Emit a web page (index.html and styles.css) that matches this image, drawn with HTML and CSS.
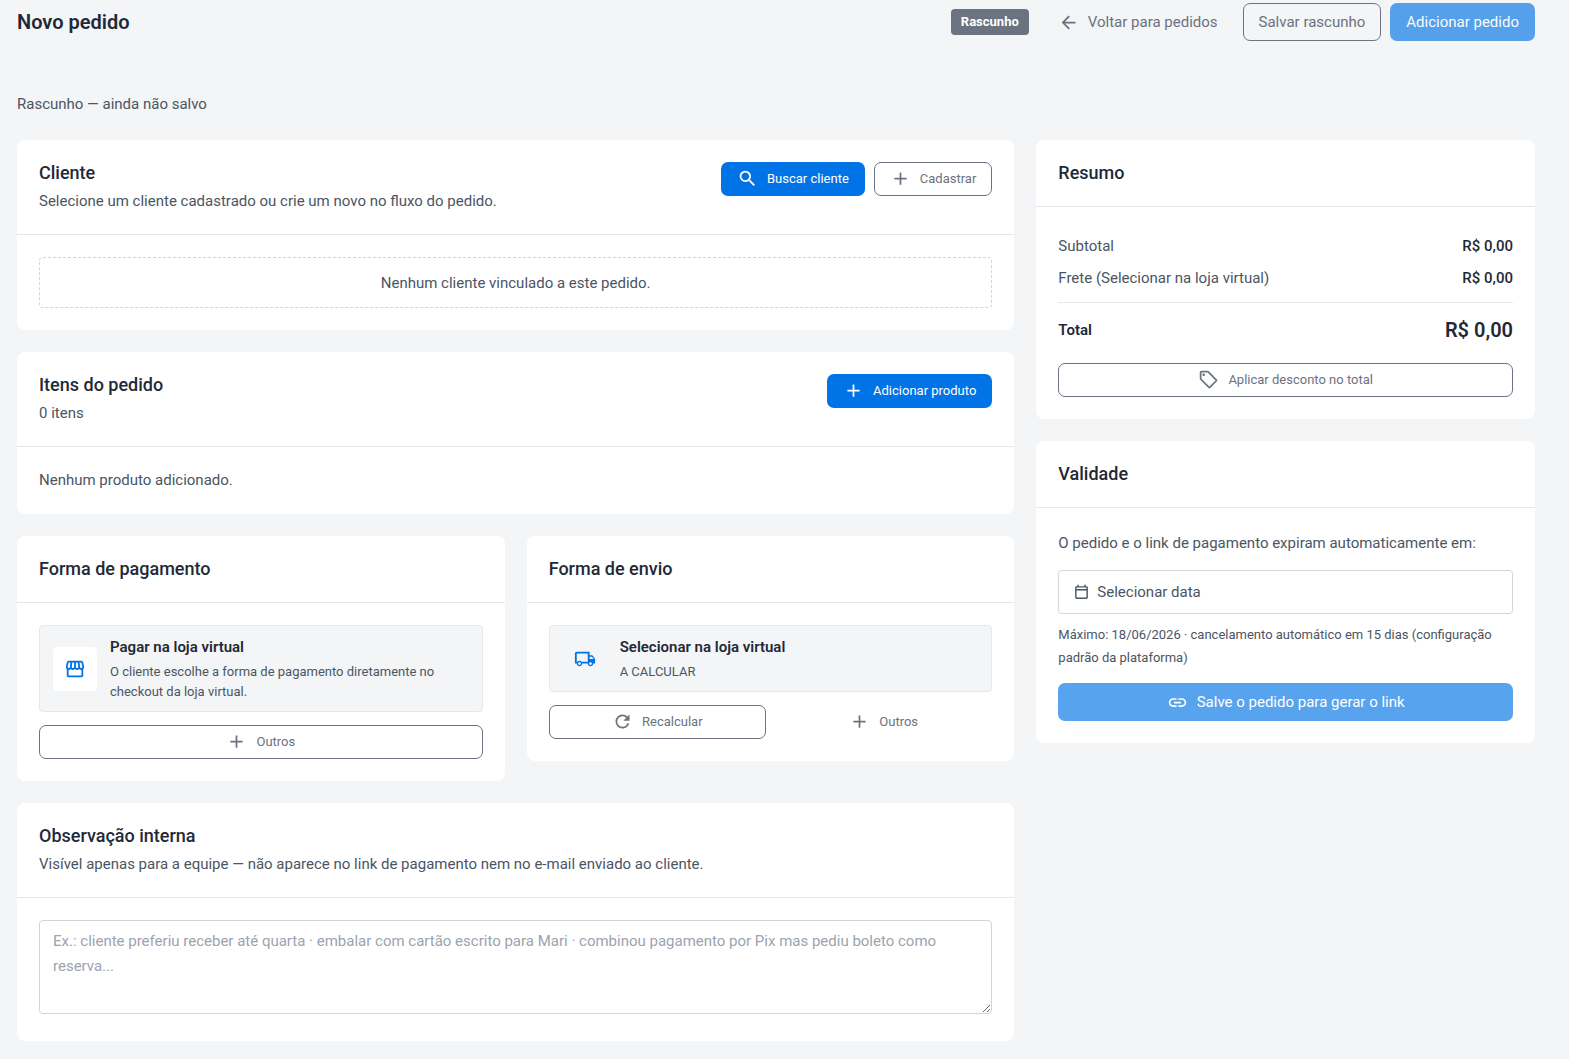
FILE: index.html
```html
<!DOCTYPE html>
<html lang="pt-BR">

<head>
    <meta charset="UTF-8">
    <meta name="viewport" content="width=device-width, initial-scale=1.0">
    <title>Novo pedido</title>
    <link rel="stylesheet" href="styles.css">
</head>

<body>
    <!-- Ícones reutilizados -->
    <svg class="sprite" aria-hidden="true">
        <symbol id="icon-plus" viewBox="0 0 24 24">
            <path d="M19 13h-6v6h-2v-6H5v-2h6V5h2v6h6v2z" />
        </symbol>
    </svg>

    <!-- Cabeçalho -->
    <header class="page-header">
        <h1>Novo pedido</h1>
        <div class="page-actions">
            <span class="badge">Rascunho</span>
            <a class="btn btn-text" href="#pedidos">
                <svg class="icon" viewBox="0 0 24 24"><path d="M20 11v2H8l5.5 5.5-1.42 1.42L4.16 12l7.92-7.92L13.5 5.5 8 11h12z" /></svg>
                Voltar para pedidos
            </a>
            <button type="button" class="btn btn-outline">Salvar rascunho</button>
            <button type="button" class="btn btn-primary" disabled>Adicionar pedido</button>
        </div>
    </header>

    <main>
        <p class="status">Rascunho — ainda não salvo</p>

        <div class="layout">
            <div class="column">
                <!-- Cliente -->
                <section class="card">
                    <div class="card-header">
                        <div>
                            <h2>Cliente</h2>
                            <p class="subtitle">Selecione um cliente cadastrado ou crie um novo no fluxo do pedido.</p>
                        </div>
                        <div class="card-actions">
                            <button type="button" class="btn btn-sm btn-primary">
                                <svg class="icon" viewBox="0 0 24 24"><path d="M9.5 3A6.5 6.5 0 0 1 16 9.5c0 1.61-.59 3.09-1.56 4.23l.27.27h.79l5 5-1.5 1.5-5-5v-.79l-.27-.27A6.516 6.516 0 0 1 9.5 16 6.5 6.5 0 0 1 3 9.5 6.5 6.5 0 0 1 9.5 3m0 2C7 5 5 7 5 9.5S7 14 9.5 14 14 12 14 9.5 12 5 9.5 5z" /></svg>
                                Buscar cliente
                            </button>
                            <button type="button" class="btn btn-sm btn-outline">
                                <svg class="icon"><use href="#icon-plus" /></svg>
                                Cadastrar
                            </button>
                        </div>
                    </div>
                    <div class="card-body">
                        <p class="empty-box">Nenhum cliente vinculado a este pedido.</p>
                    </div>
                </section>

                <!-- Itens do pedido -->
                <section class="card">
                    <div class="card-header">
                        <div>
                            <h2>Itens do pedido</h2>
                            <p class="subtitle">0 itens</p>
                        </div>
                        <div class="card-actions">
                            <button type="button" class="btn btn-sm btn-primary">
                                <svg class="icon"><use href="#icon-plus" /></svg>
                                Adicionar produto
                            </button>
                        </div>
                    </div>
                    <div class="card-body">
                        <p>Nenhum produto adicionado.</p>
                    </div>
                </section>

                <div class="two-columns">
                    <!-- Pagamento -->
                    <section class="card">
                        <div class="card-header">
                            <h2>Forma de pagamento</h2>
                        </div>
                        <div class="card-body">
                            <div class="option">
                                <span class="option-icon option-icon-white">
                                    <svg viewBox="0 0 24 24"><path d="M5.06 3C4.63 3 4.22 3.14 3.84 3.42 3.46 3.7 3.24 4.06 3.14 4.5L2.11 8.91C1.86 10 2.06 10.92 2.69 11.73L3 12.05V19C3 19.5 3.2 20 3.61 20.39S4.5 21 5 21H19C19.5 21 20 20.8 20.39 20.39S21 19.5 21 19V12.05L21.31 11.73C21.94 10.92 22.14 10 21.89 8.91L20.86 4.5C20.73 4.06 20.5 3.7 20.13 3.42C19.77 3.14 19.38 3 18.94 3M18.89 4.97L19.97 9.38C20.06 9.81 19.97 10.2 19.69 10.55C19.44 10.86 19.13 11 18.75 11C18.44 11 18.17 10.9 17.95 10.66C17.73 10.43 17.61 10.16 17.58 9.84L16.97 5M5.06 5H7.03L6.42 9.84C6.3 10.63 5.91 11 5.25 11C4.84 11 4.53 10.86 4.31 10.55C4.03 10.2 3.94 9.81 4.03 9.38M9.05 5H11V9.7C11 10.05 10.89 10.35 10.64 10.62C10.39 10.88 10.08 11 9.7 11C9.36 11 9.07 10.88 8.84 10.59C8.61 10.3 8.5 10 8.5 9.66V9.5M13 5H14.95L15.5 9.5C15.58 9.92 15.5 10.27 15.21 10.57C14.95 10.87 14.61 11 14.2 11C13.89 11 13.61 10.88 13.36 10.62C13.11 10.35 13 10.05 13 9.7M7.45 12.05C8.08 12.65 8.86 13 9.8 13C10.64 13 11.38 12.65 12 12.05C12.69 12.65 13.45 13 14.3 13C15.17 13 15.92 12.65 16.55 12.05C17.11 12.65 17.86 13 18.8 13H19.03V19H5V13H5.25C6.16 13 6.89 12.65 7.45 12.05Z" /></svg>
                                </span>
                                <div>
                                    <h3>Pagar na loja virtual</h3>
                                    <p>O cliente escolhe a forma de pagamento diretamente no checkout da loja virtual.</p>
                                </div>
                            </div>
                            <button type="button" class="btn btn-sm btn-outline btn-block">
                                <svg class="icon"><use href="#icon-plus" /></svg>
                                Outros
                            </button>
                        </div>
                    </section>

                    <!-- Envio -->
                    <section class="card">
                        <div class="card-header">
                            <h2>Forma de envio</h2>
                        </div>
                        <div class="card-body">
                            <div class="option">
                                <span class="option-icon">
                                    <svg viewBox="0 0 24 24"><path d="M18 18.5c.83 0 1.5-.67 1.5-1.5s-.67-1.5-1.5-1.5-1.5.67-1.5 1.5.67 1.5 1.5 1.5m1.5-9H17V12h4.46L19.5 9.5M6 18.5c.83 0 1.5-.67 1.5-1.5s-.67-1.5-1.5-1.5-1.5.67-1.5 1.5.67 1.5 1.5 1.5M20 8l3 4v5h-2c0 1.66-1.34 3-3 3s-3-1.34-3-3H9c0 1.66-1.34 3-3 3s-3-1.34-3-3H1V6c0-1.11.89-2 2-2h14v4h3M3 6v9h.76c.55-.61 1.35-1 2.24-1 .89 0 1.69.39 2.24 1H15V6H3z" /></svg>
                                </span>
                                <div>
                                    <h3>Selecionar na loja virtual</h3>
                                    <p>A CALCULAR</p>
                                </div>
                            </div>
                            <div class="button-row">
                                <button type="button" class="btn btn-sm btn-outline">
                                    <svg class="icon" viewBox="0 0 24 24"><path d="M17.65 6.35A7.958 7.958 0 0 0 12 4a8 8 0 0 0-8 8 8 8 0 0 0 8 8c3.73 0 6.84-2.55 7.73-6h-2.08A5.99 5.99 0 0 1 12 18a6 6 0 0 1-6-6 6 6 0 0 1 6-6c1.66 0 3.14.69 4.22 1.78L13 11h7V4l-2.35 2.35z" /></svg>
                                    Recalcular
                                </button>
                                <button type="button" class="btn btn-sm btn-text">
                                    <svg class="icon"><use href="#icon-plus" /></svg>
                                    Outros
                                </button>
                            </div>
                        </div>
                    </section>
                </div>

                <!-- Observação -->
                <section class="card">
                    <div class="card-header">
                        <div>
                            <h2><label for="observacao">Observação interna</label></h2>
                            <p class="subtitle">Visível apenas para a equipe — não aparece no link de pagamento nem no e-mail enviado ao cliente.</p>
                        </div>
                    </div>
                    <div class="card-body">
                        <textarea id="observacao" rows="3" placeholder="Ex.: cliente preferiu receber até quarta · embalar com cartão escrito para Mari · combinou pagamento por Pix mas pediu boleto como reserva..."></textarea>
                    </div>
                </section>
            </div>

            <aside class="column">
                <!-- Resumo -->
                <section class="card">
                    <div class="card-header">
                        <h2>Resumo</h2>
                    </div>
                    <div class="card-body">
                        <dl class="summary">
                            <div class="summary-row">
                                <dt>Subtotal</dt>
                                <dd>R$ 0,00</dd>
                            </div>
                            <div class="summary-row">
                                <dt>Frete (Selecionar na loja virtual)</dt>
                                <dd>R$ 0,00</dd>
                            </div>
                            <div class="summary-total">
                                <dt>Total</dt>
                                <dd>R$ 0,00</dd>
                            </div>
                        </dl>
                        <button type="button" class="btn btn-sm btn-outline btn-block">
                            <svg class="icon" viewBox="0 0 24 24"><path d="M21.41 11.58l-9-9A2 2 0 0 0 11 2H4a2 2 0 0 0-2 2v7a2 2 0 0 0 .59 1.42l9 9A2 2 0 0 0 13 22a2 2 0 0 0 1.41-.59l7-7A2 2 0 0 0 22 13a2 2 0 0 0-.59-1.42M13 20l-9-9V4h7l9 9M6.5 5A1.5 1.5 0 1 1 5 6.5 1.5 1.5 0 0 1 6.5 5z" /></svg>
                            Aplicar desconto no total
                        </button>
                    </div>
                </section>

                <!-- Validade -->
                <section class="card">
                    <div class="card-header">
                        <h2>Validade</h2>
                    </div>
                    <div class="card-body">
                        <p id="validade-texto" class="expiry-text">O pedido e o link de pagamento expiram automaticamente em:</p>
                        <button type="button" class="date-picker" aria-describedby="validade-texto">
                            <svg viewBox="0 0 24 24"><path d="M19 3h-1V1h-2v2H8V1H6v2H5a2 2 0 0 0-2 2v14a2 2 0 0 0 2 2h14a2 2 0 0 0 2-2V5a2 2 0 0 0-2-2m0 16H5V9h14v10m0-12H5V5h14v2z" /></svg>
                            Selecionar data
                        </button>
                        <p class="hint">Máximo: 18/06/2026 · cancelamento automático em 15 dias (configuração padrão da plataforma)</p>
                        <button type="button" class="btn btn-primary btn-block" disabled>
                            <svg class="icon" viewBox="0 0 24 24"><path d="M3.9 12c0-1.71 1.39-3.1 3.1-3.1h4V7H7a5 5 0 0 0-5 5 5 5 0 0 0 5 5h4v-1.9H7c-1.71 0-3.1-1.39-3.1-3.1M8 13h8v-2H8v2m9-6h-4v1.9h4c1.71 0 3.1 1.39 3.1 3.1 0 1.71-1.39 3.1-3.1 3.1h-4V17h4a5 5 0 0 0 5-5 5 5 0 0 0-5-5z" /></svg>
                            Salve o pedido para gerar o link
                        </button>
                    </div>
                </section>
            </aside>
        </div>
    </main>
</body>

</html>
```
FILE: styles.css
```css
/* Geral */
* {
    margin: 0;
    padding: 0;
    box-sizing: border-box;
}

body {
    font-family: Roboto, "Liberation Sans", sans-serif;
    font-size: 15px;
    line-height: 23px;
    color: #4b5563;
    background-color: #f3f5f7;
    padding: 3px 34px 18px 17px;
}

svg {
    fill: currentColor;
    flex-shrink: 0;
}

.sprite {
    display: none;
}

/* Cabeçalho */
.page-header {
    display: flex;
    justify-content: space-between;
    align-items: center;
}

h1 {
    font-size: 20px;
    font-weight: 600;
    color: #1f2937;
}

.page-actions {
    display: flex;
    align-items: center;
    gap: 9px;
}

.badge {
    background-color: #6b7280;
    color: white;
    font-size: 13px;
    font-weight: 700;
    line-height: 26px;
    padding: 0 10px;
    margin-right: 4px;
    border-radius: 4px;
}

.status {
    margin: 52px 0 24px;
}

/* Botões */
.btn {
    display: flex;
    align-items: center;
    justify-content: center;
    gap: 9px;
    height: 38px;
    padding: 0 14px;
    border: 1px solid transparent;
    border-radius: 7px;
    background-color: transparent;
    font-family: inherit;
    font-size: 15px;
    text-decoration: none;
    white-space: nowrap;
    cursor: pointer;
}

.page-actions .btn {
    padding: 0 15px;
}

.btn-sm {
    height: 34px;
    padding: 0 15px 1px;
    font-size: 13px;
}

.btn-primary {
    background-color: #0073e6;
    color: white;
}

.btn-primary:disabled {
    opacity: 0.65;
    cursor: default;
}

.btn-outline {
    border-color: #6b7280;
    color: #6b7280;
}

.btn-text {
    color: #6b7280;
}

.btn-block {
    width: 100%;
}

.icon {
    width: 21px;
    height: 21px;
}

.button-row {
    display: grid;
    grid-template-columns: 1fr 1fr;
    gap: 9px;
}

/* Colunas */
.layout {
    display: grid;
    grid-template-columns: 2fr 1fr;
    gap: 22px;
    align-items: start;
}

.column {
    display: flex;
    flex-direction: column;
    gap: 22px;
    min-width: 0;
}

.two-columns {
    display: grid;
    grid-template-columns: 1fr 1fr;
    gap: 22px;
    align-items: start;
}

/* Cartões */
.card {
    background-color: white;
    border-radius: 8px;
}

.card-header {
    display: flex;
    justify-content: space-between;
    align-items: flex-start;
    gap: 22px;
    padding: 22px;
    border-bottom: 1px solid #e5e7eb;
}

.card-header h2 {
    font-size: 18px;
    font-weight: 500;
    line-height: 22px;
    color: #1f2937;
}

.subtitle {
    margin-top: 6px;
    line-height: 22px;
}

.card-actions {
    display: flex;
    gap: 9px;
}

.card-body {
    padding: 22px;
}

.empty-box {
    padding: 14px 13px 12px;
    border: 1px dashed #d1d5db;
    border-radius: 4px;
    text-align: center;
}

/* Opções de pagamento e envio */
.option {
    display: flex;
    align-items: center;
    gap: 13px;
    padding: 10px 13px 9px;
    margin-bottom: 13px;
    background-color: #f3f5f7;
    border: 1px solid #e5e7eb;
    border-radius: 4px;
}

.option-icon {
    display: flex;
    align-items: center;
    justify-content: center;
    flex-shrink: 0;
    width: 44px;
    height: 44px;
    border-radius: 4px;
    color: #0073e6;
}

.option-icon-white {
    background-color: white;
}

.option-icon svg {
    width: 22px;
    height: 22px;
}

.option h3 {
    font-size: 15px;
    font-weight: 600;
    line-height: 22px;
    color: #1f2937;
}

.option p {
    margin-top: 4px;
    font-size: 13px;
    line-height: 20px;
}

/* Observação */
textarea {
    display: block;
    width: 100%;
    padding: 8px 13px 9px;
    margin-bottom: 5px;
    border: 1px solid #d1d5db;
    border-radius: 4px;
    font-family: inherit;
    font-size: 15px;
    line-height: 25px;
    color: #1f2937;
    resize: vertical;
}

textarea::placeholder {
    color: #9ca3af;
}

/* Resumo */
.summary {
    padding-top: 1px;
}

.summary-row,
.summary-total {
    display: flex;
    justify-content: space-between;
    align-items: center;
}

.summary-row {
    line-height: 32px;
}

.summary-row dd {
    font-weight: 500;
    color: #1f2937;
}

.summary-total {
    margin: 8px 0 19px;
    padding-top: 13px;
    border-top: 1px solid #e5e7eb;
    font-weight: 600;
    line-height: 28px;
    color: #1f2937;
}

.summary-total dd {
    font-size: 20px;
}

/* Validade */
.expiry-text {
    line-height: 26px;
}

.date-picker {
    display: flex;
    align-items: center;
    gap: 7px;
    width: 100%;
    height: 44px;
    padding: 0 14px;
    margin: 14px 0 9px;
    border: 1px solid #d1d5db;
    border-radius: 4px;
    background-color: white;
    font-family: inherit;
    font-size: 15px;
    color: #4b5563;
    cursor: pointer;
}

.date-picker svg {
    width: 17px;
    height: 17px;
}

.hint {
    margin-bottom: 14px;
    font-size: 13px;
}

@media (max-width: 900px) {
    .layout,
    .two-columns {
        grid-template-columns: 1fr;
    }
}
```
